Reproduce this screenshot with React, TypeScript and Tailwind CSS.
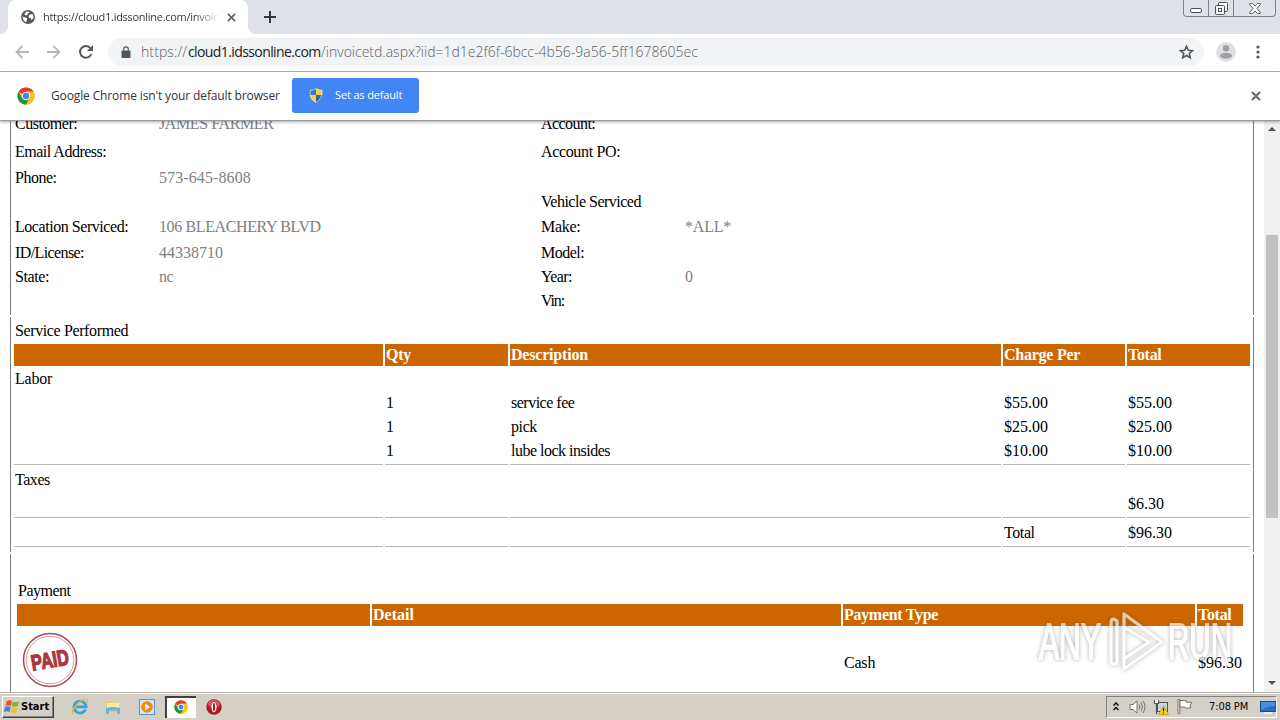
import React from 'react';

interface Field {
  label: string;
  value: string;
  labelClass: string;
  valueClass: string;
}

interface DetailRow {
  height: string;
  left: Field;
  right: Field;
}

const empty: Field = { label: '', value: '', labelClass: '', valueClass: '' };

const detailRows: DetailRow[] = [
  {
    height: 'h-[28px]',
    left: { label: 'Customer:', value: 'JAMES FARMER', labelClass: 'tracking-[-0.5px]', valueClass: 'tracking-[-0.4px]' },
    right: { label: 'Account:', value: '', labelClass: 'tracking-[-0.55px]', valueClass: '' },
  },
  {
    height: 'h-[26px]',
    left: { label: 'Email Address:', value: '', labelClass: 'tracking-[-0.5px]', valueClass: '' },
    right: { label: 'Account PO:', value: '', labelClass: 'tracking-[-0.35px]', valueClass: '' },
  },
  {
    height: 'h-[24px]',
    left: { label: 'Phone:', value: '573-645-8608', labelClass: 'tracking-[-0.5px]', valueClass: 'tracking-[0.1px]' },
    right: empty,
  },
  {
    height: 'h-[25px]',
    left: empty,
    right: { label: 'Vehicle Serviced', value: '', labelClass: 'tracking-[-0.5px]', valueClass: '' },
  },
  {
    height: 'h-[26px]',
    left: { label: 'Location Serviced:', value: '106 BLEACHERY BLVD', labelClass: 'tracking-[-0.45px]', valueClass: 'tracking-[-0.38px]' },
    right: { label: 'Make:', value: '*ALL*', labelClass: 'tracking-[-0.3px]', valueClass: 'tracking-[-0.2px]' },
  },
  {
    height: 'h-[24px]',
    left: { label: 'ID/License:', value: '44338710', labelClass: 'tracking-[-0.6px]', valueClass: '' },
    right: { label: 'Model:', value: '', labelClass: 'tracking-[-0.5px]', valueClass: '' },
  },
  {
    height: 'h-[24px]',
    left: { label: 'State:', value: 'nc', labelClass: 'tracking-[-0.4px]', valueClass: 'tracking-[-0.6px]' },
    right: { label: 'Year:', value: '0', labelClass: 'tracking-[-0.6px]', valueClass: '' },
  },
  {
    height: 'h-[24px]',
    left: empty,
    right: { label: 'Vin:', value: '', labelClass: 'tracking-[-1.1px]', valueClass: '' },
  },
];

const services = [
  { qty: '1', description: 'service fee', charge: '$55.00', total: '$55.00', tracking: 'tracking-[-0.5px]' },
  { qty: '1', description: 'pick', charge: '$25.00', total: '$25.00', tracking: 'tracking-[-0.4px]' },
  { qty: '1', description: 'lube lock insides', charge: '$10.00', total: '$10.00', tracking: 'tracking-[-0.5px]' },
];

const serviceGrid = 'grid grid-cols-[369px_123px_491px_122px_123px] gap-x-[2px]';
const paymentGrid = 'grid grid-cols-[353px_469px_352px_46px] gap-x-[2px]';

const ChromeLogo: React.FC<{ className: string }> = ({ className }) => (
  <svg className={className} viewBox="0 0 48 48">
    <circle cx="24" cy="24" r="23" fill="#fbc116" />
    <path d="M24 24 4.1 12.5A23 23 0 0 1 43.9 12.5H24z" fill="#e33b2e" />
    <path d="M4.1 12.5A23 23 0 0 0 24 47l10-17.3-10-5.7-10 5.7z" fill="#229342" />
    <path d="M24 12.5h19.9a23 23 0 0 1-19.9 34.5l10-17.3z" fill="#fbc116" />
    <circle cx="24" cy="24" r="11" fill="#fff" />
    <circle cx="24" cy="24" r="8.5" fill="#4285f4" />
  </svg>
);

const CloseIcon: React.FC<{ className: string }> = ({ className }) => (
  <svg className={className} viewBox="0 0 10 10" fill="none" stroke="#5f6368" strokeWidth="1.9">
    <path d="M1 1l8 8M9 1l-8 8" />
  </svg>
);

const TabStrip: React.FC = () => (
  <div className="flex h-[34px] shrink-0 items-start bg-[#dee1e6]">
    <div className="flex h-[34px] w-[8px] items-end bg-white">
      <div className="h-full w-full rounded-br-[8px] bg-[#dee1e6]" />
    </div>
    <div className="flex h-[34px] w-[240px] items-center rounded-t-[8px] bg-white pl-[13px]">
      <svg className="h-[14px] w-[14px] shrink-0" viewBox="0 0 14 14">
        <circle cx="7" cy="7" r="7" fill="#53575c" />
        <path d="M1.5 6.2 3.6 7.4l2.1.4.4 1.8-1 2.6C2.8 11.4 1.2 9 1.5 6.2zM5.2 1.8 8 1.4l.4 1.4-1.7.8-.3 1.5-1.7.5L3.4 4z" fill="#fff" />
        <path d="M9 4.5l2.8-.6.8 2.5-.4 2.2-1.7 1.4-.8-2-2-.6.1-1.8z" fill="#fff" />
      </svg>
      <div className="ml-[8px] w-[176px] bg-gradient-to-r from-[#303236] from-86% to-white bg-clip-text font-['Open_Sans','Noto_Sans',sans-serif] text-[11px] leading-[18px] tracking-[-0.28px] whitespace-nowrap text-transparent">
        https://cloud1.idssonline.com/invoice
      </div>
      <CloseIcon className="ml-[8px] h-[9px] w-[9px] shrink-0" />
    </div>
    <div className="h-[34px] w-[8px] bg-white">
      <div className="h-full w-full rounded-bl-[8px] bg-[#dee1e6]" />
    </div>
    <svg className="mt-[11px] ml-[8px] h-[12px] w-[12px]" viewBox="0 0 12 12" stroke="#35383c" strokeWidth="2">
      <path d="M6 0v12M0 6h12" />
    </svg>
    <div className="mr-[4px] ml-auto flex h-[17px] rounded-b-[4px] border border-t-0 border-[#7d828c]">
      <div className="flex w-[25px] items-end justify-center border-r border-[#7d828c] pb-[3px]">
        <div className="h-[5px] w-[12px] rounded-[2px] border border-[#4b5058] bg-white" />
      </div>
      <div className="flex w-[25px] items-center justify-center border-r border-[#7d828c]">
        <svg className="h-[13px] w-[13px]" viewBox="0 0 13 13" fill="#f4f5f7" stroke="#4b5058">
          <rect x="3.5" y=".5" width="9" height="9" rx="1" />
          <rect x=".5" y="3.5" width="9" height="9" rx="1" />
          <rect x="3.5" y="6.5" width="3" height="3" />
        </svg>
      </div>
      <div className="flex w-[41px] items-center justify-center">
        <svg className="h-[11px] w-[12px]" viewBox="0 0 12 11" fill="#fff" stroke="#4b5058" strokeWidth=".9">
          <path d="M.7.6h3.1L6 3.1 8.2.6h3.1v1L7.9 5.5l3.4 3.9v1H8.2L6 7.9l-2.2 2.5H.7v-1l3.4-3.9L.7 1.6z" />
        </svg>
      </div>
    </div>
  </div>
);

const Toolbar: React.FC = () => (
  <div className="flex h-[38px] shrink-0 items-center border-b border-[#b3b5b8] bg-white pb-[2px] pl-[15px]">
    <svg className="h-[14px] w-[14px]" viewBox="0 0 14 14" fill="none" stroke="#b5b7ba" strokeWidth="1.8">
      <path d="M14 7H1.5M7.5 1 1.5 7l6 6" />
    </svg>
    <svg className="ml-[18px] h-[14px] w-[14px]" viewBox="0 0 14 14" fill="none" stroke="#b5b7ba" strokeWidth="1.8">
      <path d="M0 7h12.5M6.5 1l6 6-6 6" />
    </svg>
    <svg className="ml-[18px] h-[14px] w-[14px]" viewBox="0 0 14 14" fill="none" stroke="#53575c" strokeWidth="2">
      <path d="M12.3 9A5.8 5.8 0 1 1 11.3 3.1" />
      <path d="M14 0v6H8z" fill="#53575c" stroke="none" />
    </svg>
    <div className="ml-[15px] flex h-[28px] w-[1096px] items-center rounded-full bg-[#f1f3f4] pr-[10px] pl-[13px]">
      <svg className="h-[12px] w-[10px] shrink-0" viewBox="0 0 10 12">
        <rect x="0.5" y="4.5" width="9" height="7.5" rx="1" fill="#53575c" />
        <path d="M2.7 5V3.2a2.3 2.3 0 0 1 4.6 0V5" fill="none" stroke="#53575c" strokeWidth="1.2" />
      </svg>
      <div className="ml-[10px] flex font-['Open_Sans','Noto_Sans',sans-serif] text-[14px] leading-[20px] font-light whitespace-nowrap text-[#5c6065]">
        <span className="w-[47px] tracking-[0.1px]">https://</span>
        <span className="w-[133px] font-normal tracking-[-0.6px] text-[#202124]">cloud1.idssonline.com</span>
        <span>/invoicetd.aspx?iid=1d1e2f6f-6bcc-4b56-9a56-5ff1678605ec</span>
      </div>
      <svg className="ml-auto h-[14px] w-[15px] shrink-0" viewBox="0 0 24 23" fill="none" stroke="#53575c" strokeWidth="2.6">
        <path d="M12 2l2.9 6.6 7.1.7-5.4 4.7 1.6 7L12 17.3 5.8 21l1.6-7L2 9.3l7.1-.7z" />
      </svg>
    </div>
    <svg className="ml-[12px] h-[20px] w-[20px]" viewBox="0 0 20 20">
      <circle cx="10" cy="10" r="10" fill="#dfe0e2" />
      <circle cx="10" cy="6.3" r="3.2" fill="#9fa1a4" />
      <ellipse cx="10" cy="13.7" rx="6" ry="3" fill="#9fa1a4" />
    </svg>
    <svg className="ml-[20px] h-[14px] w-[4px]" viewBox="0 0 4 14" fill="#53575c">
      <circle cx="2" cy="2" r="1.6" />
      <circle cx="2" cy="7" r="1.6" />
      <circle cx="2" cy="12" r="1.6" />
    </svg>
  </div>
);

const InfoBar: React.FC = () => (
  <div className="relative z-10 flex h-[49px] shrink-0 items-center border-b border-[#9b9b9b] bg-white pr-[19px] pb-[2px] pl-[17px] font-['Open_Sans','Noto_Sans',sans-serif] shadow-[0_1px_3px_rgba(0,0,0,0.35)]">
    <ChromeLogo className="mt-px h-[18px] w-[18px]" />
    <span className="mt-px ml-[16px] w-[229px] text-[12px] leading-[18px] tracking-[-0.13px] whitespace-nowrap text-[#303236]">
      Google Chrome isn't your default browser
    </span>
    <button className="ml-[12px] flex h-[35px] w-[127px] items-center rounded-[3px] bg-[#4285f4] pl-[17px] text-white">
      <svg className="h-[15px] w-[14px]" viewBox="0 0 14 15">
        <path d="M7 0C5 1.3 3 1.8.6 1.8.2 8 2 12.5 7 15z" fill="#3b78c4" />
        <path d="M7 0c2 1.3 4 1.8 6.4 1.8C13.8 8 12 12.5 7 15z" fill="#f6cf3a" />
        <path d="M.6 7H7v8C3.3 13.2 1.2 10.5.6 7z" fill="#f6cf3a" />
        <path d="M7 7h6.4c-.6 3.5-2.7 6.2-6.4 8z" fill="#2c64b0" />
        <path d="M7 .6c2 1.2 3.8 1.7 5.9 1.7C13.2 8 11.5 12 7 14.4 2.5 12 .8 8 1.1 2.3 3.2 2.3 5 1.8 7 .6z" fill="none" stroke="#d9dde3" strokeWidth=".8" />
      </svg>
      <span className="ml-[12px] text-[11px] leading-[18px] tracking-[-0.15px] whitespace-nowrap">Set as default</span>
    </button>
    <CloseIcon className="mt-px ml-auto h-[10px] w-[10px]" />
  </div>
);

const DetailField: React.FC<{ field: Field }> = ({ field }) => (
  <div className="flex">
    <span className={`w-[144px] ${field.labelClass}`}>{field.label}</span>
    <span className={`text-[#808080] ${field.valueClass}`}>{field.value}</span>
  </div>
);

const CustomerDetails: React.FC = () => (
  <section className="h-[194px] shrink-0 overflow-hidden border-x border-[#808080] pl-[4px]">
    <div className="-mt-[7px]">
      {detailRows.map((row, index) => (
        <div key={index} className={`grid grid-cols-[526px_1fr] ${row.height}`}>
          <DetailField field={row.left} />
          <DetailField field={row.right} />
        </div>
      ))}
    </div>
  </section>
);

const Rule: React.FC = () => (
  <div className={`${serviceGrid} h-px`}>
    {[0, 1, 2, 3, 4].map((cell) => (
      <div key={cell} className="bg-[#b8b8b8]" />
    ))}
  </div>
);

const ServiceTable: React.FC = () => (
  <section className="mt-[2px] h-[235px] shrink-0 border-x border-[#808080] pt-[4px] pl-[3px]">
    <div className="h-[23px] pl-px tracking-[-0.38px]">Service Performed</div>
    <div className={`${serviceGrid} grid-rows-[22px] font-bold text-white`}>
      <div className="bg-[#cc6600]" />
      <div className="bg-[#cc6600] pt-px pl-px tracking-[-0.2px]">Qty</div>
      <div className="bg-[#cc6600] pt-px pl-px tracking-[-0.2px]">Description</div>
      <div className="bg-[#cc6600] pt-px pl-px tracking-[-0.25px]">Charge Per</div>
      <div className="bg-[#cc6600] pt-px pl-px tracking-[-0.3px]">Total</div>
    </div>
    <div className="mt-[3px] h-[24px] pl-px tracking-[-0.2px]">Labor</div>
    {services.map((service) => (
      <div key={service.description} className={`${serviceGrid} h-[24px]`}>
        <div />
        <div className="pl-px">{service.qty}</div>
        <div className={`pl-px ${service.tracking}`}>{service.description}</div>
        <div className="pl-px">{service.charge}</div>
        <div className="pl-px">{service.total}</div>
      </div>
    ))}
    <div className="-mt-px">
      <Rule />
    </div>
    <div className="mt-[5px] h-[24px] pl-px tracking-[-0.45px]">Taxes</div>
    <div className={`${serviceGrid} h-[23px]`}>
      <div className="col-start-5 pl-px">$6.30</div>
    </div>
    <Rule />
    <div className={`${serviceGrid} h-[28px] pt-[5px]`}>
      <div className="col-start-4 pl-px tracking-[-0.4px]">Total</div>
      <div className="pl-px">$96.30</div>
    </div>
    <Rule />
  </section>
);

const PaidStamp: React.FC = () => (
  <svg className="mt-[6px] ml-[5px] h-[56px] w-[56px]" viewBox="0 0 56 56">
    <circle cx="28" cy="28" r="26.5" fill="none" stroke="#a84a52" strokeWidth="1.5" />
    <circle cx="28" cy="28" r="23.8" fill="none" stroke="#c98489" strokeWidth=".8" />
    <text
      x="28"
      y="35.5"
      textAnchor="middle"
      textLength="38"
      lengthAdjust="spacingAndGlyphs"
      transform="rotate(-10 28 28)"
      fontFamily="Liberation Sans Narrow, Liberation Sans, sans-serif"
      fontWeight="bold"
      fontSize="22"
      fill="#a83840"
      stroke="#a83840"
      strokeWidth="1.3"
    >
      PAID
    </text>
  </svg>
);

const PaymentTable: React.FC = () => (
  <section className="mt-[2px] min-h-0 flex-1 border-x border-[#808080] pt-[27px] pl-[6px]">
    <div className="h-[23px] pl-px tracking-[-0.5px]">Payment</div>
    <div className={`${paymentGrid} grid-rows-[22px] font-bold text-white`}>
      <div className="bg-[#cc6600]" />
      <div className="bg-[#cc6600] pt-px pl-px">Detail</div>
      <div className="bg-[#cc6600] pt-px pl-px tracking-[-0.3px]">Payment Type</div>
      <div className="bg-[#cc6600] pt-px pl-px tracking-[-0.3px]">Total</div>
    </div>
    <div className={paymentGrid}>
      <PaidStamp />
      <div />
      <div className="pt-[27px] pl-px tracking-[-0.2px]">Cash</div>
      <div className="pt-[27px] pl-px">$96.30</div>
    </div>
  </section>
);

const ScrollBar: React.FC = () => (
  <div className="flex w-[16px] shrink-0 flex-col items-center bg-[#f1f1f1]">
    <svg className="mt-[6px] h-[4px] w-[8px]" viewBox="0 0 8 4">
      <path d="M0 4l4-4 4 4z" fill="#505050" />
    </svg>
    <div className="mt-[104px] h-[283px] w-[12px] bg-[#c1c1c1]" />
    <svg className="mt-auto mb-[7px] h-[4px] w-[8px]" viewBox="0 0 8 4">
      <path d="M0 0l4 4 4-4z" fill="#505050" />
    </svg>
  </div>
);

const Watermark: React.FC = () => (
  <svg
    className="absolute top-[606px] left-[1034px] z-20 h-[70px] w-[204px] opacity-65 drop-shadow-[0_0_2px_rgba(80,80,80,0.7)]"
    viewBox="0 0 204 70"
  >
    <path
      d="M83 57V15q-6-5-6 3v36q0 6 6 3zM90 8v55l38-27zM90 21l25 15-25 17"
      fill="none"
      stroke="#fff"
      strokeWidth="3.2"
      strokeLinejoin="round"
    />
    <g
      fontFamily="Liberation Sans Narrow, Liberation Sans, sans-serif"
      fontSize="50"
      fill="#fff"
      stroke="#fff"
      strokeWidth="1.8"
    >
      <text x="5" y="52.5" textLength="62" lengthAdjust="spacingAndGlyphs">ANY</text>
      <text x="134" y="52.5" textLength="64" lengthAdjust="spacingAndGlyphs">RUN</text>
    </g>
  </svg>
);

const QuickLaunch: React.FC = () => (
  <>
    <svg className="ml-[17px] h-[18px] w-[18px]" viewBox="0 0 18 18">
      <path d="M14.5 11.5A6 6 0 1 1 15 8.8H5" fill="none" stroke="#35a3dc" strokeWidth="2.8" />
      <path d="M1.8 16.5C-.5 13 7 3 13.5 1.5c3-.6 3.7.8 2.5 3.5" fill="none" stroke="#e4b83c" strokeWidth="1.3" />
    </svg>
    <svg className="ml-[16px] h-[16px] w-[16px]" viewBox="0 0 16 16">
      <path d="M1 2h5l1 1.5h7V13H1z" fill="#e8c868" />
      <path d="M2 4h12v7H2z" fill="#f9eaa6" />
      <path d="M1 9q7-2 14 0v6h-3v-3.5H4V15H1z" fill="#64b5df" />
    </svg>
    <svg className="ml-[18px] h-[16px] w-[16px]" viewBox="0 0 16 16">
      <rect x=".5" y=".5" width="15" height="15" fill="#cfe3f4" stroke="#5d96c8" />
      <circle cx="8" cy="8" r="5.8" fill="#f08a1c" />
      <path d="M6.2 4.8v6.4L11 8z" fill="#fff" />
    </svg>
    <div className="ml-[10px] flex h-[22px] w-[31px] items-center justify-center border-t-2 border-l-2 border-[#404040] bg-white pr-[2px] pb-[2px]">
      <ChromeLogo className="h-[14px] w-[14px]" />
    </div>
    <svg className="ml-[10px] h-[16px] w-[16px]" viewBox="0 0 16 16">
      <circle cx="8" cy="8" r="7.7" fill="#b81420" />
      <ellipse cx="8" cy="5" rx="6" ry="4" fill="#dc5a5f" />
      <ellipse cx="8" cy="8" rx="3" ry="5.6" fill="#fff" stroke="#7c0c12" strokeWidth=".6" />
      <ellipse cx="8" cy="8" rx="1" ry="4.2" fill="#a80f1b" />
    </svg>
  </>
);

const TaskBar: React.FC = () => (
  <footer className="flex h-[28px] shrink-0 items-center border-t border-[#b9b6b0] bg-[#d4d0c8] pl-[2px] shadow-[inset_0_1px_0_#fff]">
    <button className="flex h-[22px] w-[52px] items-center border border-t-white border-r-[#404040] border-b-[#404040] border-l-white pl-px font-['DejaVu_Sans_Condensed','DejaVu_Sans',sans-serif] text-[11px] font-bold text-black shadow-[inset_-1px_-1px_0_#808080]">
      <svg className="h-[15px] w-[16px] shrink-0" viewBox="0 0 16 15">
        <path d="M2.5 2.5q3-2 5.5-.5L7 7Q4.5 5.5 1.2 7z" fill="#e2592c" />
        <path d="M9 2.5q3 1.5 6-.3L13.8 7q-3 1.5-6 .3z" fill="#7cb642" />
        <path d="M1 8q3-1.5 5.7 0l-1.2 5Q3 11.5 0 13z" fill="#3c86d0" />
        <path d="M7.6 8.4q3 1.3 6-.2l-1.2 5q-3 1.5-6 0z" fill="#f3c229" />
      </svg>
      <span className="pt-[2px] pl-px">Start</span>
    </button>
    <QuickLaunch />
    <div className="mr-[3px] ml-auto flex h-[22px] w-[171px] items-center border border-t-[#808080] border-r-white border-b-white border-l-[#808080] pl-[6px]">
      <svg className="h-[9px] w-[6px]" viewBox="0 0 6 9" fill="none" stroke="#000" strokeWidth="1.3">
        <path d="M.5 3.5 3 1l2.5 2.5M.5 8 3 5.5 5.5 8" />
      </svg>
      <svg className="ml-[10px] h-[14px] w-[17px]" viewBox="0 0 17 14" fill="#fff" stroke="#77746f">
        <path d="M1 4.5h3L8 1v12L4 9.5H1z" />
        <path d="M10 4.5q1.7 2.5 0 5M12 2.5q3 4.5 0 9M14 1q4 6 0 12" fill="none" />
      </svg>
      <svg className="ml-[7px] h-[16px] w-[16px]" viewBox="0 0 16 16">
        <rect x="4.5" y="3.5" width="10" height="9" fill="#c7d6e4" stroke="#55524e" />
        <path d="M1 1h5v4H1z" fill="#fff" />
        <path d="M1.5 1v3.5h4V1M3.5 4.5V15" fill="none" stroke="#55524e" strokeWidth="1.2" />
        <path d="M10.5 6.5 15.5 15.5h-10z" fill="#f8d21c" stroke="#c29510" strokeWidth=".7" />
        <path d="M10.5 9v3.5M10.5 13.5v1" stroke="#222" strokeWidth="1.2" />
      </svg>
      <svg className="ml-[8px] h-[15px] w-[16px]" viewBox="0 0 16 15" fill="#fff" stroke="#77746f">
        <path d="M1 .5h1.8V14.5H1z" />
        <path d="M3 1.5h6v1.8h6l-2 3 1 2.7H8V8H3z" />
      </svg>
      <span className="ml-[16px] w-[42px] pt-px font-['DejaVu_Sans_Condensed','DejaVu_Sans',sans-serif] text-[11px] tracking-[-0.1px] whitespace-nowrap text-black">
        7:08 PM
      </span>
      <svg className="ml-[9px] h-[14px] w-[16px] shrink-0" viewBox="0 0 16 14">
        <rect x=".5" y="1.5" width="15" height="10" fill="#2c6cc4" stroke="#244a85" />
        <path d="M1 2h14v4Q8 6 1 10z" fill="#4a8fdc" />
        <path d="M4 13h8" stroke="#eee" strokeWidth="2" />
      </svg>
    </div>
  </footer>
);

const App: React.FC = () => {
  return (
    <div className="relative flex h-[720px] w-[1280px] flex-col overflow-hidden bg-white">
      <TabStrip />
      <Toolbar />
      <InfoBar />
      <div className="flex min-h-0 flex-1">
        <main className="flex w-[1264px] flex-col overflow-hidden pr-[10px] pl-[10px] font-['Liberation_Serif',serif] text-[16px] leading-[20px] whitespace-nowrap text-black">
          <CustomerDetails />
          <ServiceTable />
          <PaymentTable />
        </main>
        <ScrollBar />
      </div>
      <TaskBar />
      <Watermark />
    </div>
  );
};

export default App;
